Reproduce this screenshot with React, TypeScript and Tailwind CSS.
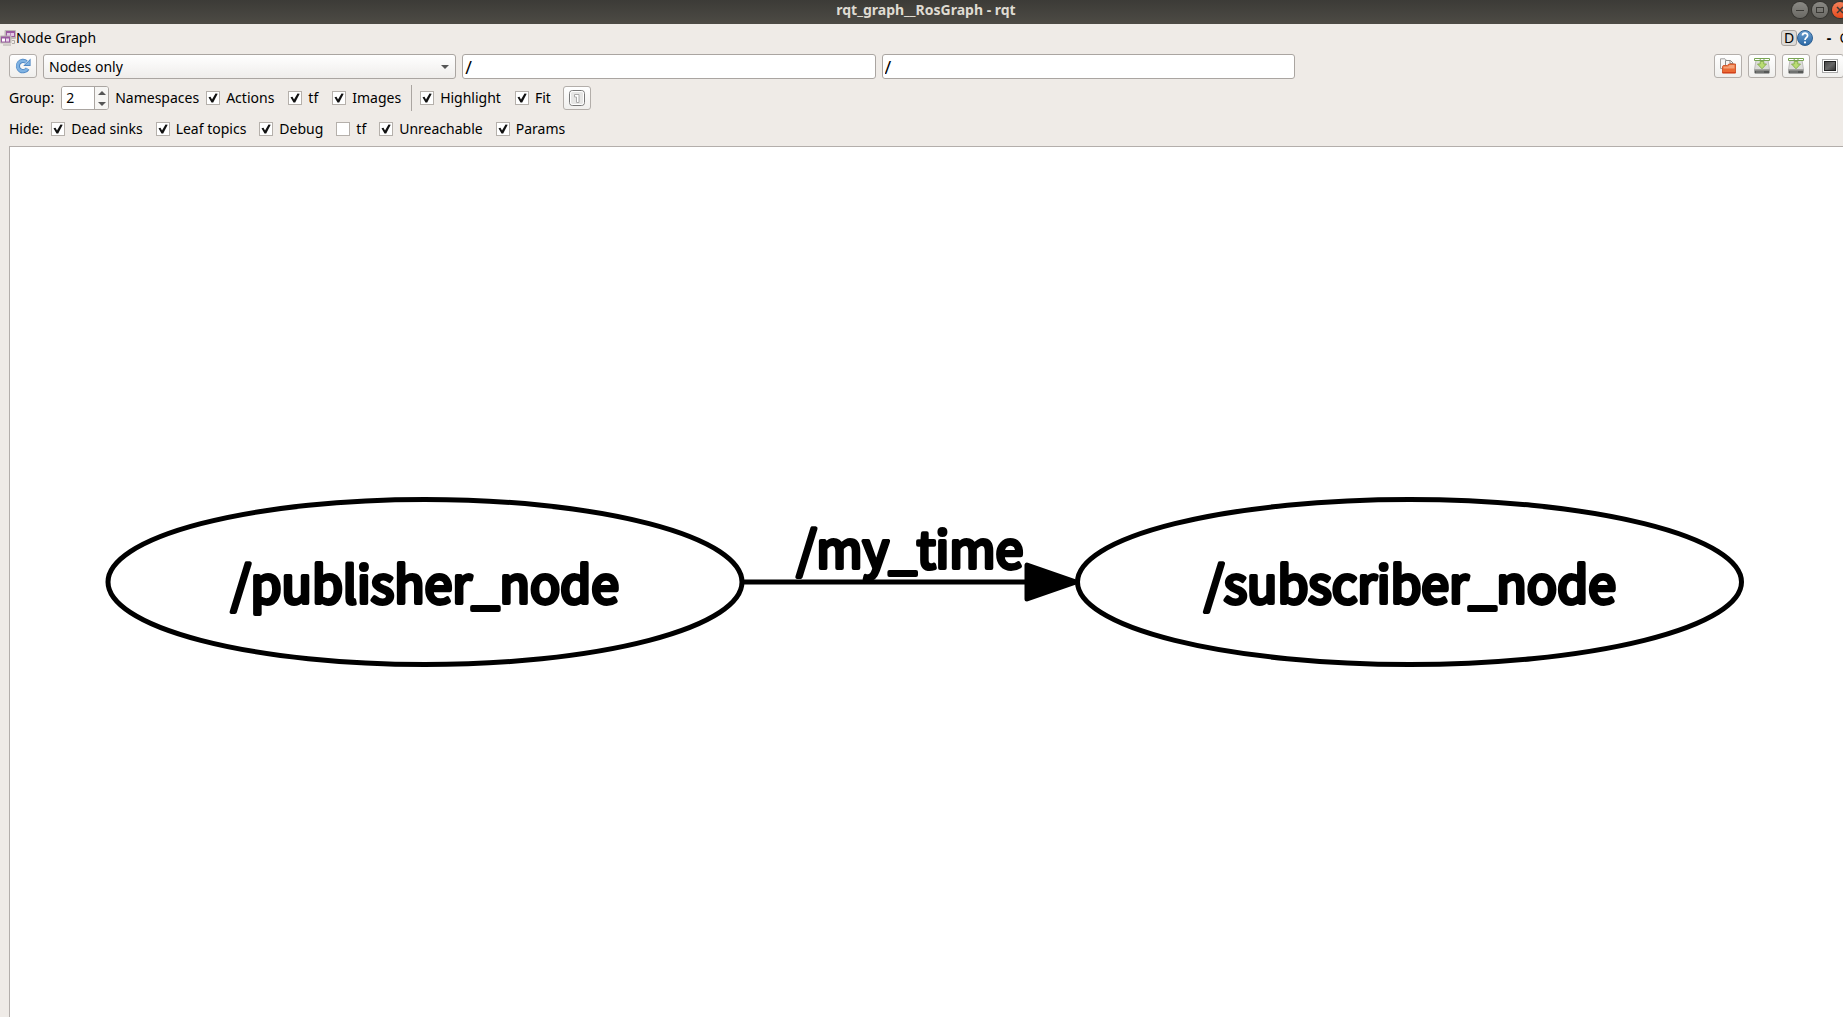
import type { ReactNode } from "react";

const toolButton =
  "flex h-6 w-7 shrink-0 items-center justify-center rounded-[3px] border border-[#b3aeaa] bg-linear-to-b from-white to-[#f0efed]";

function RefreshIcon() {
  return (
    <svg viewBox="0 0 16 16" className="size-4" aria-hidden="true">
      <path d="M12.600 10.600A5.200 5.200 0 1 1 11.400 4" fill="none" stroke="#5088c4" strokeWidth="4.200" />
      <path d="M15.600 0.600V8H8.200l2.400-2.400 2.600-2.600z" fill="#5088c4" />
      <path d="M12.200 10.800A5.200 5.200 0 1 1 11.400 4.200" fill="none" stroke="#7fb2e2" strokeWidth="2.600" />
      <path d="M14.700 2.600V7.100H10.200z" fill="#7fb2e2" />
    </svg>
  );
}

function GraphIcon() {
  return (
    <svg viewBox="0 0 16 16" className="size-4 shrink-0" aria-hidden="true">
      <rect x="4.500" y="0" width="11.500" height="9" rx="1" fill="#bdb8b4" />
      <rect x="6" y="1" width="9" height="6" fill="#9a5aa0" />
      <rect x="7" y="3" width="7" height="3" fill="#e3c9e6" />
      <rect x="10" y="3" width="1" height="3" fill="#b884bd" />
      <rect x="0" y="5.500" width="11.500" height="8" rx="1" fill="#bdb8b4" />
      <rect x="1" y="6.500" width="9" height="6" fill="#9a5aa0" />
      <rect x="2" y="8.500" width="3" height="3" fill="#fff" />
      <rect x="6" y="8.500" width="3" height="3" fill="#ead6ec" />
      <path d="M3 15h8M12 10.500h2.500v3H12" fill="none" stroke="#b0aba7" />
    </svg>
  );
}

function FolderIcon() {
  return (
    <svg viewBox="0 0 16 16" className="size-4" aria-hidden="true">
      <path d="M0.500 0.800h4.500l2 2V10.500H0.500z" fill="#f6f6f5" stroke="#a3a2a0" />
      <path d="M5.500 2.500H10.500l2.500 2.500v5H5.500z" fill="#f6f6f5" stroke="#8b8a88" />
      <path d="M10 2.500V5.500h3" fill="none" stroke="#8b8a88" />
      <path d="M2.500 8.500l.8-1h4l1.500-1.500h6.700v9H2.500z" fill="#ea6a35" stroke="#cf5a30" />
      <path d="M3.500 8.500h4.500l1.500-1.500h5v3.500h-11z" fill="#f6a277" />
      <path d="M2.500 14.700h13" stroke="#d23a17" />
    </svg>
  );
}

function SaveIcon() {
  return (
    <svg viewBox="0 0 16 16" className="size-4" aria-hidden="true">
      <path d="M2 2h12l1.500 9.500H.5z" fill="#dcdcda" stroke="#b3b2b0" strokeWidth="0.800" />
      <path d="M0.500 11.500h15v3.300q0 .7-.7.7H1.200q-.7 0-.7-.7z" fill="#565857" />
      <path d="M1 12h14" stroke="#bcbcba" />
      <path d="M2 14h8" stroke="#8a8c8b" />
      <path d="M0.500 0.500h15v2H0.500z" fill="#fff" stroke="#79a552" />
      <path d="M5.700 1h1v1h-1zM9.500 1h1v1h-1z" fill="#79a552" />
      <path d="M6.200 3.500h3.600V6H12.500L8 10.800 3.500 6h2.700z" fill="#b9dc72" stroke="#83ab4c" strokeWidth="0.900" />
    </svg>
  );
}

function ScreenIcon() {
  return (
    <svg viewBox="0 0 16 16" className="size-4" aria-hidden="true">
      <defs>
        <linearGradient id="screen" x1="0" y1="0" x2="1" y2="1">
          <stop offset="0" stopColor="#444" />
          <stop offset="0.500" stopColor="#686868" />
          <stop offset="1" stopColor="#303030" />
        </linearGradient>
      </defs>
      <rect x="0.500" y="1.500" width="15" height="13" fill="#fff" stroke="#aaa" />
      <rect x="2.500" y="3.500" width="11" height="9" fill="url(#screen)" stroke="#222" />
    </svg>
  );
}

function OneIcon() {
  return (
    <svg viewBox="0 0 16 16" className="size-4" aria-hidden="true">
      <rect x="0.500" y="0.500" width="15" height="15" rx="3" fill="#f1f1f0" stroke="#777" />
      <rect x="1.500" y="1.500" width="13" height="13" rx="2" fill="#e6e6e5" stroke="#fff" />
      <path d="M5.500 4.500h4.500v8H7.500v-5.500h-2z" fill="#fff" stroke="#aaa" />
    </svg>
  );
}

function HelpIcon() {
  return (
    <svg viewBox="0 0 16 16" className="size-4" aria-hidden="true">
      <defs>
        <linearGradient id="help" x1="0" y1="0" x2="0" y2="1">
          <stop offset="0" stopColor="#6d9fd0" />
          <stop offset="1" stopColor="#2a68a5" />
        </linearGradient>
      </defs>
      <circle cx="8" cy="8" r="7.500" fill="url(#help)" stroke="#2f6193" />
      <path d="M5.500 5.500C5.500 2.400 10.600 2.400 10.600 5.400 10.600 7.500 8 7.600 8 10" fill="none" stroke="#fff" strokeWidth="1.700" />
      <circle cx="8" cy="12.400" r="1.100" fill="#fff" />
    </svg>
  );
}

function WindowButton({ label, close, children }: { label: string; close?: boolean; children: ReactNode }) {
  return (
    <button
      type="button"
      aria-label={label}
      className={
        close
          ? "size-4 shrink-0 rounded-full bg-linear-to-b from-[#f58058] to-[#e4491a] shadow-[0_0_0_1px_#33322e]"
          : "size-4 shrink-0 rounded-full bg-linear-to-b from-[#8a8984] to-[#6a6964] shadow-[0_0_0_1px_#33322e]"
      }
    >
      <svg viewBox="0 0 16 16" className="size-4" fill="none" stroke="#3a3935" aria-hidden="true">
        {children}
      </svg>
    </button>
  );
}

function Check({ label, checked = true }: { label: string; checked?: boolean }) {
  return (
    <label className="flex items-center gap-1.5 whitespace-nowrap">
      <span className="relative flex size-3.5">
        <input
          type="checkbox"
          defaultChecked={checked}
          className="peer size-3.5 appearance-none border border-[#b5b0ab] bg-white"
        />
        <svg
          viewBox="0 0 14 14"
          className="pointer-events-none absolute inset-0 hidden size-3.5 peer-checked:block"
          aria-hidden="true"
        >
          <path d="M2.500 6.200l2-.4 1.500 2.800L9.500 2.500l2.200.2L7.200 11.500H5.500z" fill="#111" />
        </svg>
      </span>
      {label}
    </label>
  );
}

const field = "h-[25px] w-full min-w-0 rounded-[3px] border border-[#aaa5a1] text-black outline-none";

function FilterInput({ label }: { label: string }) {
  return (
    <div className="flex min-w-0 flex-1">
      <input aria-label={label} defaultValue="/" className={`${field} bg-white px-[2px] text-lg`} />
    </div>
  );
}

export default function App() {
  return (
    <div className="flex h-screen flex-col overflow-hidden bg-[#efebe7] font-['Noto_Sans',sans-serif] text-sm leading-5 text-black">
      <header className="flex h-6 shrink-0 items-center bg-linear-to-b from-[#3c3b37] to-[#4d4b45]">
        <h1 className="flex-1 pb-1 pl-1 text-center text-sm leading-5 font-bold text-[#dfdbd2]">
          rqt_graph__RosGraph - rqt
        </h1>
        <div className="-mr-[5px] -ml-14 flex shrink-0 gap-1 pb-1">
          <WindowButton label="Minimize">
            <path d="M4 8.500h8" />
          </WindowButton>
          <WindowButton label="Maximize">
            <rect x="4.500" y="5.500" width="7" height="5" />
          </WindowButton>
          <WindowButton label="Close" close>
            <path d="M5 5l6 6M11 5l-6 6" strokeWidth="1.500" />
          </WindowButton>
        </div>
      </header>

      <div className="flex h-[30px] shrink-0 items-center pb-0.5">
        <GraphIcon />
        <span className="flex-1">Node Graph</span>
        <button
          type="button"
          className="flex size-4 items-center justify-center rounded-[3px] border border-[#aaa5a1] bg-[#dedbd7] leading-4"
        >
          D
        </button>
        <button type="button" aria-label="Help">
          <HelpIcon />
        </button>
        <button type="button" className="ml-3 w-2 font-bold">
          -
        </button>
        <button type="button" className="-mr-2 ml-1.5 w-3">
          O
        </button>
      </div>

      <div className="-mr-px flex shrink-0 items-start gap-1.5 pl-[9px]">
        <button type="button" aria-label="Refresh" className={toolButton}>
          <RefreshIcon />
        </button>
        <div className="relative flex min-w-0 flex-1">
          <select
            aria-label="Graph type"
            className={`${field} appearance-none bg-linear-to-b from-white to-[#efedeb] px-[5px]`}
          >
            <option>Nodes only</option>
          </select>
          <svg
            viewBox="0 0 8 4"
            className="pointer-events-none absolute top-[11px] right-[7px] h-1 w-2"
            aria-hidden="true"
          >
            <path d="M0 0h8L4 4z" fill="#555" />
          </svg>
        </div>
        <FilterInput label="Namespace filter" />
        <FilterInput label="Topic filter" />
        <div className="-ml-1.5 flex-1" />
        <button type="button" aria-label="Load" className={toolButton}>
          <FolderIcon />
        </button>
        <button type="button" aria-label="Save as DOT" className={toolButton}>
          <SaveIcon />
        </button>
        <button type="button" aria-label="Save as SVG" className={toolButton}>
          <SaveIcon />
        </button>
        <button type="button" aria-label="Save as image" className={toolButton}>
          <ScreenIcon />
        </button>
      </div>

      <div className="flex h-[38px] shrink-0 items-center pl-[9px]">
        <label htmlFor="group">Group:</label>
        <div className="ml-[7px] flex h-6 w-12 overflow-hidden rounded-[3px] border border-[#aaa5a1] bg-white">
          <input id="group" defaultValue="2" className="w-8 min-w-0 bg-white pl-1 outline-none" />
          <div className="flex flex-1 flex-col border-l border-[#aaa5a1] bg-[#f6f5f3]">
            <button type="button" aria-label="Increase" className="flex flex-1 items-center justify-center">
              <svg viewBox="0 0 8 4" className="h-1 w-2" aria-hidden="true">
                <path d="M0 4h8L4 0z" fill="#555" />
              </svg>
            </button>
            <button type="button" aria-label="Decrease" className="flex flex-1 items-center justify-center">
              <svg viewBox="0 0 8 4" className="h-1 w-2" aria-hidden="true">
                <path d="M0 0h8L4 4z" fill="#555" />
              </svg>
            </button>
          </div>
        </div>
        <span className="mr-[7px] ml-1.5">Namespaces</span>
        <div className="flex gap-3.5">
          <Check label="Actions" />
          <Check label="tf" />
          <Check label="Images" />
        </div>
        <div className="mr-2 ml-2.5 h-[26px] w-px bg-[#aaa5a1]" />
        <div className="mr-3 flex gap-3.5">
          <Check label="Highlight" />
          <Check label="Fit" />
        </div>
        <button type="button" aria-label="Reset zoom" className={toolButton}>
          <OneIcon />
        </button>
      </div>

      <div className="flex h-[29px] shrink-0 items-start gap-[13px] pt-[2px] pl-[9px]">
        <div className="flex gap-2">
          <span>Hide:</span>
          <Check label="Dead sinks" />
        </div>
        <Check label="Leaf topics" />
        <Check label="Debug" />
        <Check label="tf" checked={false} />
        <Check label="Unreachable" />
        <Check label="Params" />
      </div>

      <main className="ml-[9px] min-h-0 flex-1 border-t border-l border-[#b3aeab] bg-white">
        <svg
          viewBox="0 0 1833 870"
          className="size-full font-['Noto_Sans_CJK_JP',sans-serif] text-[50px]"
          stroke="#000"
          strokeWidth="5"
          strokeLinejoin="round"
          textAnchor="middle"
        >
          <ellipse cx="415" cy="435" rx="317" ry="82.500" fill="none" />
          <ellipse cx="1399.500" cy="435" rx="332" ry="82.500" fill="none" />
          <path d="M732 435h300" />
          <path d="M1017 418v34l49-17z" />
          <g strokeWidth="4">
            <text x="415" y="456">/publisher_node</text>
            <text x="900" y="421">/my_time</text>
            <text x="1400" y="456">/subscriber_node</text>
          </g>
        </svg>
      </main>
    </div>
  );
}
